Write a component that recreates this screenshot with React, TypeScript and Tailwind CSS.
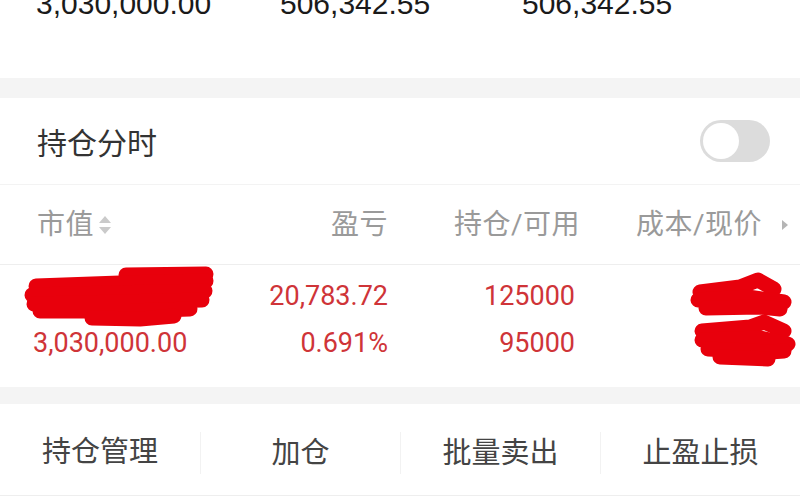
import React from 'react';

const font = { fontFamily: 'Roboto, "Noto Sans CJK SC", sans-serif' };

function SortIcon() {
  return (
    <svg width="16" height="24" viewBox="0 0 16 24" className="ml-[3px]">
      <path d="M8 3 L14 10 L2 10 Z" fill="#cacaca" />
      <path d="M8 21 L14 14 L2 14 Z" fill="#cacaca" />
    </svg>
  );
}

function Scribbles() {
  return (
    <>
      <svg className="absolute left-0 top-0" width="240" height="80" viewBox="0 0 240 80">
        <g stroke="#e8000c" strokeWidth="15" strokeLinecap="round" strokeLinejoin="round" fill="none">
          <path d="M126 10 L206 9" />
          <path d="M36 21 L120 18 L206 16" />
          <path d="M32 30 L110 28 L205 26" />
          <path d="M34 39 L120 37 L202 35" />
          <path d="M40 46 L130 46 L190 44" />
          <path d="M92 53 L140 54 L174 51" />
        </g>
      </svg>
      <svg className="absolute right-0 top-0" width="140" height="110" viewBox="0 0 140 110">
        <g stroke="#e8000c" strokeWidth="15" strokeLinecap="round" strokeLinejoin="round" fill="none">
          <path d="M40 27 L80 22 L98 15 L114 24" />
          <path d="M38 35 L88 32 L124 37" />
          <path d="M46 43 L100 42 L120 44" />
          <path d="M42 66 L90 62 L104 57 L124 66" />
          <path d="M42 75 L100 73 L128 79" />
          <path d="M48 84 L110 87 L124 86" />
          <path d="M60 92 L108 94" />
        </g>
      </svg>
    </>
  );
}

export default function App() {
  return (
    <div className="w-[800px] h-[500px] overflow-hidden bg-white" style={font}>
      <div className="h-[78px] overflow-hidden">
        <div className="flex -mt-[14px] text-[30px] font-medium text-[#1a1a1a] leading-[36px]" style={{ fontFamily: '"Liberation Sans", Arial, sans-serif' }}>
          <span className="w-[280px] pl-[36px]">3,030,000.00</span>
          <span className="w-[242px]">506,342.55</span>
          <span>506,342.55</span>
        </div>
      </div>
      <div className="h-[20px] bg-[#f4f4f4]" />
      <div className="h-[87px] flex items-center justify-between pl-[37px] pr-[30px] border-b border-[#f3f3f3]">
        <span className="text-[30px] text-[#333] mt-[4px]">持仓分时</span>
        <div className="w-[70px] h-[42px] rounded-full bg-[#dcdcdc] flex items-center px-[3px]">
          <div className="w-[36px] h-[36px] rounded-full bg-white" />
        </div>
      </div>
      <div className="h-[80px] flex items-center text-[28px] tracking-[0.5px] text-[#9a9a9a] border-b border-[#eeeeee]">
        <div className="w-[200px] pl-[37px] flex items-center">
          市值
          <SortIcon />
        </div>
        <div className="w-[188px] text-right">盈亏</div>
        <div className="w-[192px] text-right">持仓/可用</div>
        <div className="flex-1 pl-[56px] flex items-center">
          成本/现价
          <svg width="10" height="14" viewBox="0 0 10 14" className="ml-[18px]">
            <path d="M2 2 L8 7 L2 12 Z" fill="#b5b5b5" />
          </svg>
        </div>
      </div>
      <div className="relative h-[122px] pt-[15px] text-[27px] text-[#cf3438]">
        <div className="flex items-center h-[33px]">
          <div className="w-[200px]" />
          <div className="w-[188px] text-right">20,783.72</div>
          <div className="w-[187px] text-right">125000</div>
        </div>
        <div className="flex items-center h-[33px] mt-[14px]">
          <div className="w-[200px] pl-[33px]">3,030,000.00</div>
          <div className="w-[188px] text-right">0.691%</div>
          <div className="w-[187px] text-right">95000</div>
        </div>
        <Scribbles />
      </div>
      <div className="h-[17px] bg-[#f4f4f4]" />
      <div className="h-[92px] pt-[6px] grid grid-cols-4 items-center text-[29px] text-[#444] border-b border-[#eeeeee]">
        <div className="text-center">持仓管理</div>
        <div className="text-center border-l border-[#f2f2f2] h-[42px] leading-[42px]">加仓</div>
        <div className="text-center border-l border-[#f2f2f2] h-[42px] leading-[42px]">批量卖出</div>
        <div className="text-center border-l border-[#f2f2f2] h-[42px] leading-[42px]">止盈止损</div>
      </div>
    </div>
  );
}
